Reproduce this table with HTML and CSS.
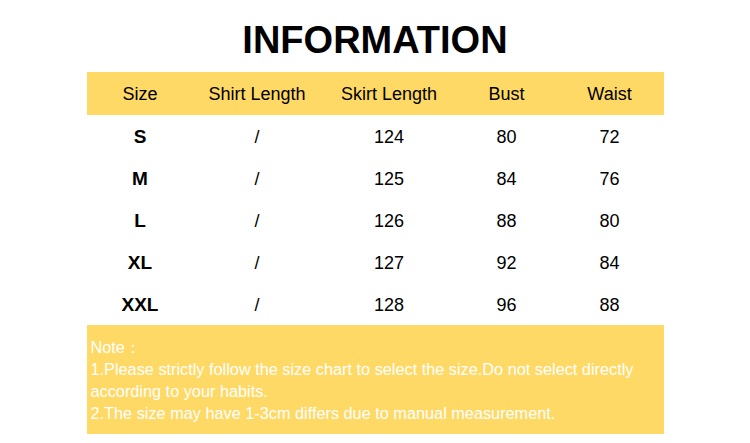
FILE: index.html
```html
<!DOCTYPE html>
<html lang="en">
<head>
<meta charset="utf-8">
<title>Information</title>
<link rel="stylesheet" href="styles.css">
</head>
<body>
<main class="sheet">
  <h1 class="title">INFORMATION</h1>
  <div class="chart">
    <div class="row head">
      <div>Size</div><div>Shirt Length</div><div>Skirt Length</div><div>Bust</div><div>Waist</div>
    </div>
    <div class="row"><div class="size">S</div><div>/</div><div>124</div><div>80</div><div>72</div></div>
    <div class="row"><div class="size">M</div><div>/</div><div>125</div><div>84</div><div>76</div></div>
    <div class="row"><div class="size">L</div><div>/</div><div>126</div><div>88</div><div>80</div></div>
    <div class="row"><div class="size">XL</div><div>/</div><div>127</div><div>92</div><div>84</div></div>
    <div class="row"><div class="size">XXL</div><div>/</div><div>128</div><div>96</div><div>88</div></div>
  </div>
  <div class="note">
    <p>Note：</p>
    <p>1.Please strictly follow the size chart to select the size.Do not select directly according to your habits.</p>
    <p>2.The size may have 1-3cm differs due to manual measurement.</p>
  </div>
</main>
</body>
</html>
```

FILE: styles.css
```css
html, body {
  margin: 0;
  padding: 0;
  background: #ffffff;
}

body {
  font-family: "Liberation Sans", Arial, sans-serif;
  color: #000000;
}

.sheet {
  width: 577px;
  margin: 0 auto;
  padding-top: 19px;
}

.title {
  margin: 0 0 11px;
  font-size: 38px;
  line-height: 42px;
  font-weight: 700;
  text-align: center;
}

.chart {
  display: flex;
  flex-direction: column;
}

.row {
  display: grid;
  grid-template-columns: 107px 127px 137px 98px 108px;
  height: 42px;
  line-height: 42px;
  font-size: 18px;
  text-align: center;
  padding-top: 1px;
  box-sizing: border-box;
}

.row.head {
  background: #ffd966;
  height: 43px;
  line-height: 41px;
  padding-top: 2px;
}

.size {
  font-weight: 700;
  font-size: 19px;
}

.note {
  background: #ffd966;
  color: #ffffff;
  height: 109px;
  box-sizing: border-box;
  padding: 11px 4px 0;
  font-size: 16.3px;
  line-height: 22px;
}

.note p {
  margin: 0;
}
```
